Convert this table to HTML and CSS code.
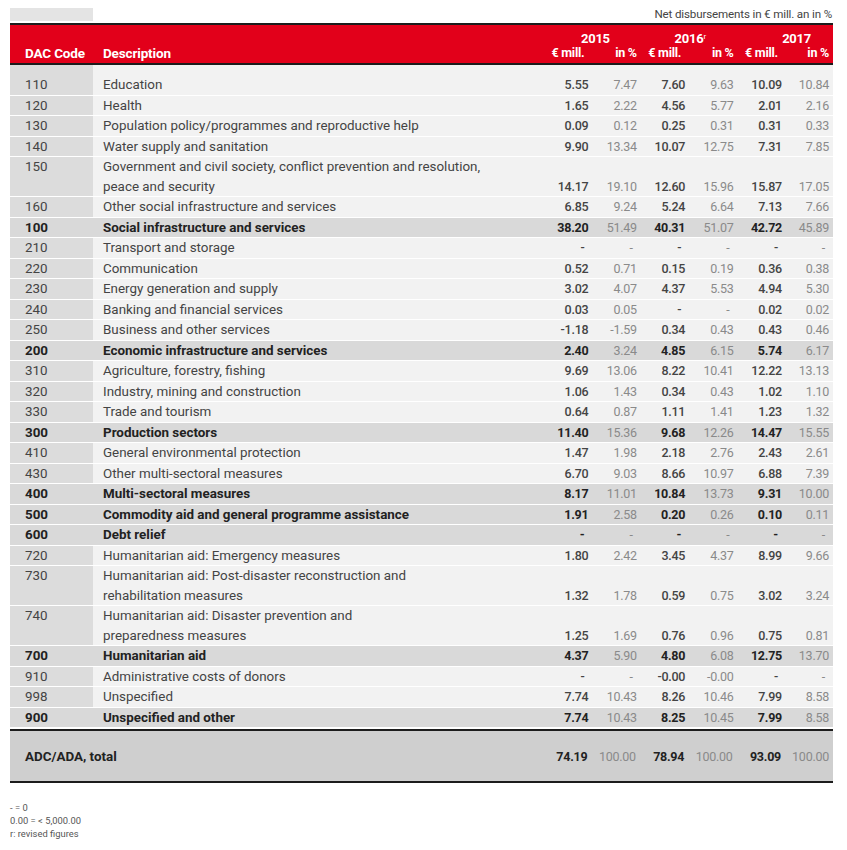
FILE: index.html
```html
<!DOCTYPE html>
<html lang="en">
<head>
<meta charset="utf-8">
<title>ADC/ADA net disbursements by DAC code</title>
<link rel="stylesheet" href="styles.css">
</head>
<body>
<div class="page">
  <div class="topbar">
    <div class="tab"></div>
    <div class="unit">Net disbursements in € mill. an in %</div>
  </div>
  <table class="dac">
    <colgroup>
      <col class="c-code"><col class="c-desc">
      <col class="c-num"><col class="c-num"><col class="c-num"><col class="c-num"><col class="c-num"><col class="c-last">
    </colgroup>
    <thead>
      <tr class="years">
        <th></th><th></th>
        <th colspan="2" class="y15">2015</th>
        <th colspan="2" class="y16">2016<sup>r</sup></th>
        <th colspan="2" class="y17">2017</th>
      </tr>
      <tr class="units">
        <th class="code">DAC Code</th>
        <th class="desc">Description</th>
        <th class="mill">€ mill.</th><th class="pct">in %</th>
        <th class="mill">€ mill.</th><th class="pct">in %</th>
        <th class="mill">€ mill.</th><th class="pct">in %</th>
      </tr>
    </thead>
    <tbody>
      <tr class="first"><td class="code">110</td><td class="desc">Education</td><td class="m">5.55</td><td class="p">7.47</td><td class="m">7.60</td><td class="p">9.63</td><td class="m">10.09</td><td class="p">10.84</td></tr>
      <tr><td class="code">120</td><td class="desc">Health</td><td class="m">1.65</td><td class="p">2.22</td><td class="m">4.56</td><td class="p">5.77</td><td class="m">2.01</td><td class="p">2.16</td></tr>
      <tr><td class="code">130</td><td class="desc">Population policy/programmes and reproductive help</td><td class="m">0.09</td><td class="p">0.12</td><td class="m">0.25</td><td class="p">0.31</td><td class="m">0.31</td><td class="p">0.33</td></tr>
      <tr><td class="code">140</td><td class="desc">Water supply and sanitation</td><td class="m">9.90</td><td class="p">13.34</td><td class="m">10.07</td><td class="p">12.75</td><td class="m">7.31</td><td class="p">7.85</td></tr>
      <tr><td class="code">150</td><td class="desc">Government and civil society, conflict prevention and resolution,<br>peace and security</td><td class="m">14.17</td><td class="p">19.10</td><td class="m">12.60</td><td class="p">15.96</td><td class="m">15.87</td><td class="p">17.05</td></tr>
      <tr><td class="code">160</td><td class="desc">Other social infrastructure and services</td><td class="m">6.85</td><td class="p">9.24</td><td class="m">5.24</td><td class="p">6.64</td><td class="m">7.13</td><td class="p">7.66</td></tr>
      <tr class="group"><td class="code">100</td><td class="desc">Social infrastructure and services</td><td class="m">38.20</td><td class="p">51.49</td><td class="m">40.31</td><td class="p">51.07</td><td class="m">42.72</td><td class="p">45.89</td></tr>
      <tr><td class="code">210</td><td class="desc">Transport and storage</td><td class="m dash">-</td><td class="p dash">-</td><td class="m dash">-</td><td class="p dash">-</td><td class="m dash">-</td><td class="p dash">-</td></tr>
      <tr><td class="code">220</td><td class="desc">Communication</td><td class="m">0.52</td><td class="p">0.71</td><td class="m">0.15</td><td class="p">0.19</td><td class="m">0.36</td><td class="p">0.38</td></tr>
      <tr><td class="code">230</td><td class="desc">Energy generation and supply</td><td class="m">3.02</td><td class="p">4.07</td><td class="m">4.37</td><td class="p">5.53</td><td class="m">4.94</td><td class="p">5.30</td></tr>
      <tr><td class="code">240</td><td class="desc">Banking and financial services</td><td class="m">0.03</td><td class="p">0.05</td><td class="m dash">-</td><td class="p dash">-</td><td class="m">0.02</td><td class="p">0.02</td></tr>
      <tr><td class="code">250</td><td class="desc">Business and other services</td><td class="m">-1.18</td><td class="p">-1.59</td><td class="m">0.34</td><td class="p">0.43</td><td class="m">0.43</td><td class="p">0.46</td></tr>
      <tr class="group"><td class="code">200</td><td class="desc">Economic infrastructure and services</td><td class="m">2.40</td><td class="p">3.24</td><td class="m">4.85</td><td class="p">6.15</td><td class="m">5.74</td><td class="p">6.17</td></tr>
      <tr><td class="code">310</td><td class="desc">Agriculture, forestry, fishing</td><td class="m">9.69</td><td class="p">13.06</td><td class="m">8.22</td><td class="p">10.41</td><td class="m">12.22</td><td class="p">13.13</td></tr>
      <tr><td class="code">320</td><td class="desc">Industry, mining and construction</td><td class="m">1.06</td><td class="p">1.43</td><td class="m">0.34</td><td class="p">0.43</td><td class="m">1.02</td><td class="p">1.10</td></tr>
      <tr><td class="code">330</td><td class="desc">Trade and tourism</td><td class="m">0.64</td><td class="p">0.87</td><td class="m">1.11</td><td class="p">1.41</td><td class="m">1.23</td><td class="p">1.32</td></tr>
      <tr class="group"><td class="code">300</td><td class="desc">Production sectors</td><td class="m">11.40</td><td class="p">15.36</td><td class="m">9.68</td><td class="p">12.26</td><td class="m">14.47</td><td class="p">15.55</td></tr>
      <tr><td class="code">410</td><td class="desc">General environmental protection</td><td class="m">1.47</td><td class="p">1.98</td><td class="m">2.18</td><td class="p">2.76</td><td class="m">2.43</td><td class="p">2.61</td></tr>
      <tr><td class="code">430</td><td class="desc">Other multi-sectoral measures</td><td class="m">6.70</td><td class="p">9.03</td><td class="m">8.66</td><td class="p">10.97</td><td class="m">6.88</td><td class="p">7.39</td></tr>
      <tr class="group"><td class="code">400</td><td class="desc">Multi-sectoral measures</td><td class="m">8.17</td><td class="p">11.01</td><td class="m">10.84</td><td class="p">13.73</td><td class="m">9.31</td><td class="p">10.00</td></tr>
      <tr class="group"><td class="code">500</td><td class="desc">Commodity aid and general programme assistance</td><td class="m">1.91</td><td class="p">2.58</td><td class="m">0.20</td><td class="p">0.26</td><td class="m">0.10</td><td class="p">0.11</td></tr>
      <tr class="group"><td class="code">600</td><td class="desc">Debt relief</td><td class="m dash">-</td><td class="p dash">-</td><td class="m dash">-</td><td class="p dash">-</td><td class="m dash">-</td><td class="p dash">-</td></tr>
      <tr><td class="code">720</td><td class="desc">Humanitarian aid: Emergency measures</td><td class="m">1.80</td><td class="p">2.42</td><td class="m">3.45</td><td class="p">4.37</td><td class="m">8.99</td><td class="p">9.66</td></tr>
      <tr><td class="code">730</td><td class="desc">Humanitarian aid: Post-disaster reconstruction and<br>rehabilitation measures</td><td class="m">1.32</td><td class="p">1.78</td><td class="m">0.59</td><td class="p">0.75</td><td class="m">3.02</td><td class="p">3.24</td></tr>
      <tr><td class="code">740</td><td class="desc">Humanitarian aid: Disaster prevention and<br>preparedness measures</td><td class="m">1.25</td><td class="p">1.69</td><td class="m">0.76</td><td class="p">0.96</td><td class="m">0.75</td><td class="p">0.81</td></tr>
      <tr class="group"><td class="code">700</td><td class="desc">Humanitarian aid</td><td class="m">4.37</td><td class="p">5.90</td><td class="m">4.80</td><td class="p">6.08</td><td class="m">12.75</td><td class="p">13.70</td></tr>
      <tr><td class="code">910</td><td class="desc">Administrative costs of donors</td><td class="m dash">-</td><td class="p dash">-</td><td class="m">-0.00</td><td class="p">-0.00</td><td class="m dash">-</td><td class="p dash">-</td></tr>
      <tr><td class="code">998</td><td class="desc">Unspecified</td><td class="m">7.74</td><td class="p">10.43</td><td class="m">8.26</td><td class="p">10.46</td><td class="m">7.99</td><td class="p">8.58</td></tr>
      <tr class="group last"><td class="code">900</td><td class="desc">Unspecified and other</td><td class="m">7.74</td><td class="p">10.43</td><td class="m">8.25</td><td class="p">10.45</td><td class="m">7.99</td><td class="p">8.58</td></tr>
    </tbody>
    <tfoot>
      <tr class="total"><td colspan="2" class="code">ADC/ADA, total</td><td class="m">74.19</td><td class="p">100.00</td><td class="m">78.94</td><td class="p">100.00</td><td class="m">93.09</td><td class="p">100.00</td></tr>
    </tfoot>
  </table>
  <div class="notes">
    <div>- = 0</div>
    <div>0.00 = &lt; 5,000.00</div>
    <div>r: revised figures</div>
  </div>
</div>
</body>
</html>
```
FILE: styles.css
```css
html, body {
  margin: 0;
  padding: 0;
  background: #ffffff;
}

body {
  padding: 8px 14px 0 10px;
  font-family: Roboto, "Liberation Sans", sans-serif;
  color: #444;
}

.page {
  width: 823px;
}

.topbar {
  display: flex;
  justify-content: space-between;
  align-items: center;
  height: 13px;
}

.tab {
  width: 83px;
  height: 13px;
  background: #e4e4e4;
}

.unit {
  font-size: 11.6px;
  line-height: 13px;
  color: #444;
  padding-right: 1px;
  letter-spacing: -0.15px;
}

.dac {
  width: 823px;
  margin-top: 2px;
  border-collapse: separate;
  border-spacing: 0;
  table-layout: fixed;
  font-size: 12.5px;
  letter-spacing: -0.25px;
}

.c-code { width: 83px; }
.c-desc { width: 447px; }
.c-num { width: 48.4px; }
.c-last { width: 51px; }

/* header */
.dac thead th {
  background: #e2001a;
  color: #ffffff;
  font-weight: 700;
  padding: 0;
  white-space: nowrap;
}

.dac thead .years th {
  border-top: 2px solid #1c1c1c;
  line-height: 14px;
  padding-top: 7px;
  font-size: 13px;
}

.dac thead .units th {
  border-bottom: 2px solid #1c1c1c;
  line-height: 14px;
  padding-bottom: 3px;
  font-size: 12.5px;
}

.dac thead .units th.code,
.dac thead .units th.desc {
  font-size: 13.5px;
  letter-spacing: -0.15px;
}

.y15 { text-align: center; padding-left: 14px !important; }
.y16 { text-align: center; padding-left: 10px !important; }
.y17 { text-align: right; padding-right: 22px !important; }

.dac sup {
  font-size: 8px;
  line-height: 0;
  vertical-align: 4px;
  font-weight: 400;
}

.dac thead th.code { text-align: left; padding-left: 15px; }
.dac thead th.desc { text-align: left; padding-left: 10px; }
.dac thead th.mill { text-align: right; padding-right: 4px; }
.dac thead th.pct { text-align: right; padding-right: 0; }
.dac thead th.pct:last-child { padding-right: 4px; }

/* body */
.dac tbody td {
  line-height: 19.5px;
  padding: 0;
  border-bottom: 1px solid #ffffff;
  background: #f2f2f2;
  vertical-align: bottom;
  white-space: nowrap;
}

.dac tbody tr.first td { padding-top: 10px; }
.dac tbody tr.last td { border-bottom-width: 2px; }

.dac td.code {
  background: #dcdcdc;
  padding-left: 15px;
  vertical-align: top;
  color: #444;
  font-size: 13.4px;
  letter-spacing: 0;
}

.dac td.desc {
  padding-left: 10px;
  color: #444;
  font-size: 13.4px;
  letter-spacing: 0;
}

.dac td.m {
  text-align: right;
  color: #444;
  font-weight: 500;
}

.dac td.p {
  text-align: right;
  color: #8a8a8a;
  font-weight: 400;
}

.dac td.p:last-child { padding-right: 4px; }

.dac td.dash { padding-right: 4px; }
.dac td.p.dash:last-child { padding-right: 8px; }

.dac tbody tr.group td {
  background: #d9d9d9;
}

.dac tbody tr.group td.code,
.dac tbody tr.group td.desc,
.dac tbody tr.group td.m {
  font-weight: 700;
  color: #222;
}

/* total */
.dac tfoot td {
  background: #cfcfcf;
  border-top: 2px solid #1c1c1c;
  border-bottom: 2px solid #1c1c1c;
  line-height: 19px;
  padding-top: 16px;
  padding-bottom: 15px;
  vertical-align: middle;
}

.dac tfoot td.code {
  background: #cfcfcf;
  font-weight: 700;
  color: #222;
  vertical-align: middle;
}

.dac tfoot td.m {
  font-weight: 700;
  color: #222;
}

/* notes */
.notes {
  margin-top: 18px;
  font-size: 9.4px;
  line-height: 13px;
  color: #555;
}
```
